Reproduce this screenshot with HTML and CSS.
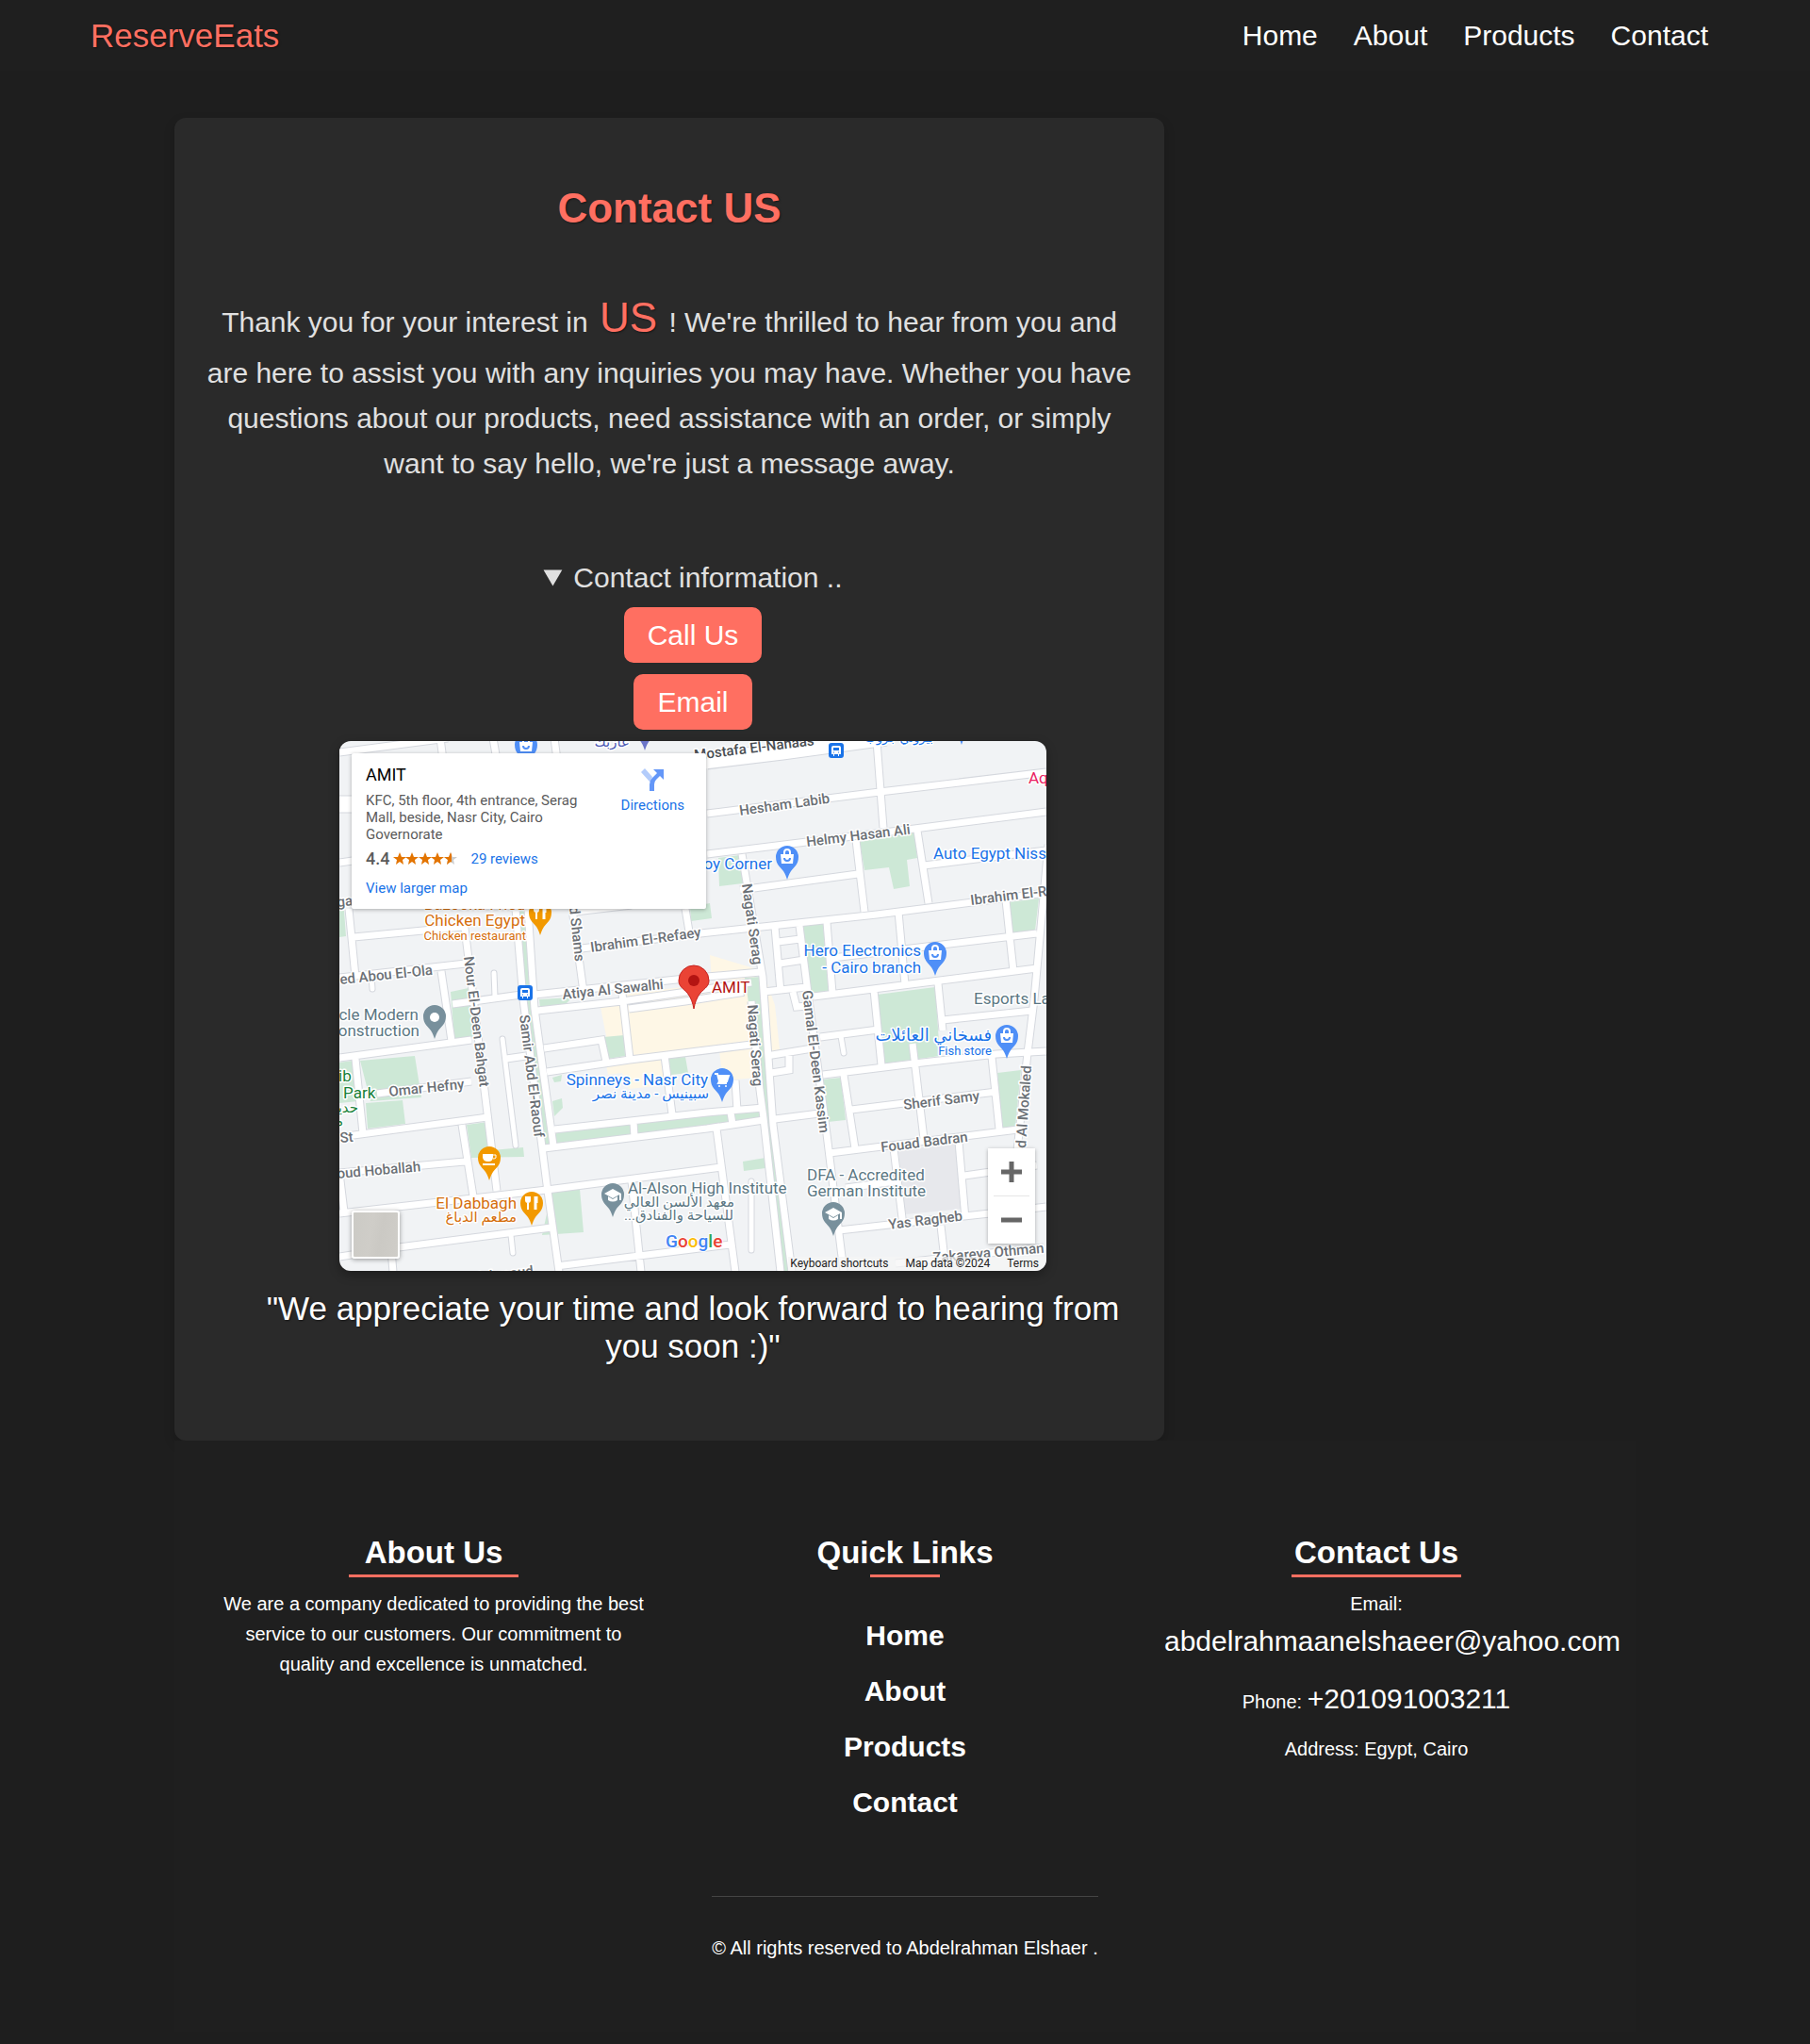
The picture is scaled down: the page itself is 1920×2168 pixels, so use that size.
FILE: index.html
```html
<!DOCTYPE html>
<html lang="en">
<head>
<meta charset="utf-8">
<meta name="viewport" content="width=device-width, initial-scale=1">
<title>ReserveEats - Contact</title>
<link rel="stylesheet" href="styles.css">
</head>
<body>
<header class="site-header">
  <a class="logo" href="#">ReserveEats</a>
  <nav class="main-nav">
    <a href="#">Home</a>
    <a href="#">About</a>
    <a href="#">Products</a>
    <a href="#">Contact</a>
  </nav>
</header>

<main class="page">
  <section class="card">
    <h1 class="card-title">Contact US</h1>
    <p class="intro">Thank you for your interest in <span class="brand">US</span> ! We're thrilled to hear from you and are here to assist you with any inquiries you may have. Whether you have questions about our products, need assistance with an order, or simply want to say hello, we're just a message away.</p>

    <div class="contact-block">
      <details open>
        <summary>Contact information ..</summary>
        <div class="contact-list">
          <button class="btn" type="button">Call Us</button>
          <button class="btn" type="button">Email</button>
          <div class="map">
            <svg class="map-canvas" viewBox="0 0 750 562" role="img" aria-label="Map of Nasr City">
              <defs>
                <path id="pin" d="M0 0C-1-3-2-6-4-9C-7-13-12-16-12-24A12 12 0 1 1 12-24C12-16 7-13 4-9C2-6 1-3 0 0Z"/>
                <g id="bag"><path d="M-7-27H7L6-17H-6Z" fill="#fff"/><path d="M-3-27V-29A3 3 0 0 1 3-29V-27" fill="none" stroke="#fff" stroke-width="2"/><path d="M-3-23A3 3 0 0 0 3-23" fill="none" stroke="#4f8ff7" stroke-width="2"/></g>
                <g id="cap" fill="#fff"><path d="M-9-25L0-30L9-25L0-20Z"/><path d="M-5-22V-18Q0-15 5-18V-22L0-19Z"/><path d="M7-25H9V-18H7Z"/></g>
                <g id="fork" fill="none" stroke="#fff"><path d="M-6-31V-27Q-6-25-4-25Q-2-25-2-27V-31M-4-31V-17" stroke-width="2"/><path d="M4-31V-17M5-31V-24" stroke-width="3"/></g>
                <g id="bus"><rect x="-8" y="-8" width="16" height="16" rx="3" fill="#1a73e8"/><path d="M-5-3Q-5-5-3-5H3Q5-5 5-3V4H3V6H2V4H-2V6H-3V4H-5Z" fill="#fff"/><path d="M-3-3H3V0H-3Z" fill="#1a73e8"/><path d="M-3 2H-2M2 2H3" stroke="#1a73e8"/></g>
                <g id="roads">
                  <path d="M0 12L115-3M107-3L110 20M163-3L167 20M228-3L231 20M0 129L14 127M10 178L17 250M15 208L131 197M132 190L167 477M0 251L134 236M108 244L119 318M120 279L193 269M187 178L195 274L220 470L233 563M200 178L207 284L227 429M207 269L367 252L447 245M257 220L383 204L570 184L750 161M247 178L259 266M250 181L310 174M367 178L371 202"/>
                  <path d="M390 77L573 54L750 33M570 0L577 92M390 120L610 93L750 75M548 105L557 181M613 95L625 172M620 132L750 116M425 158L550 141M427 120L449 250L460 407L480 563M437 276L446 370L450 400L468 563M462 197L468 266M488 196L497 267L517 417L535 563M465 213L489 210M467 236L493 232M450 266L495 261M517 192L523 267M503 271L740 241M593 181L600 258M523 230L740 204M707 169L715 244M752 110L737 274L730 331L712 500M567 264L575 344M635 257L640 307"/>
                  <path d="M640 296L735 286M510 314L572 306M608 321L620 422M513 354L610 342L697 332L750 329M220 351L308 338L437 322M453 334L502 326M458 352L477 349V334M535 354L547 432M543 391L697 372M462 401L509 395M520 437L720 412M692 335L700 412M588 432L598 514M657 425L664 507M663 461L740 450M530 519L690 501L750 494M638 514L642 550M590 554L747 537M537 474L590 467"/>
                  <path d="M228 412L390 394L450 389M217 432L390 411L450 402M415 394L417 406M312 404L313 420M420 360L422 392M400 411L420 563M0 501L220 476L390 454L405 452M230 557L390 537L415 534M310 467L320 563M0 547L63 537L225 516M55 540L57 563M0 336L140 317M17 337L25 416M0 420L157 399M40 374L140 361M130 407L142 483M0 458L133 446M0 458L5 499M177 337L198 334M217 326L278 317L283 340M210 286L300 276L437 256M300 268L308 337M307 284L367 276L425 267L424 257M345 334L353 396M481 266L485 282L497 281"/>
                </g>
                <path id="lanes" d="M34 248L35 263M164 246L165 271M173 316L187 429M532 313L535 331M437 467V540M182 524L184 543"/>
              </defs>
              <rect width="750" height="562" fill="#f1f3f5"/>
              <g fill="#fef7e6">
                <path d="M277 282L307 272L312 334L284 318ZM305 268L440 252L446 325L312 336ZM393 227L443 242L440 252L395 254ZM452 252L462 280L467 327L455 330ZM283 344L341 337L345 365L307 369L300 352L285 354ZM403 329L440 325L443 357L420 359L405 345Z"/>
              </g>
              <path d="M593 434L655 427L663 496L600 502Z" fill="#e7e8ec"/>
              <g fill="#cde8d6">
                <path d="M552 107L610 97L613 124L602 126L605 154L588 157L583 134L557 137ZM402 124L425 121L428 151L403 154ZM372 176L393 172L395 188L373 191ZM492 196L513 193L519 267L500 270ZM710 171L742 167L738 201L713 204ZM570 269L632 261L637 334L578 342ZM513 359L532 357L537 402L518 404ZM698 352L723 349L717 409L703 410ZM428 446L452 442V453L429 456Z"/>
                <path d="M430 251L449 250L460 407L480 563H468L450 395L442 330ZM22 339L80 334L87 378L33 382ZM28 384L67 381L70 406L30 411ZM0 341L14 339L20 382L0 384ZM0 180H5L7 207L0 208ZM118 266L137 262L143 314L122 316ZM135 407L157 404L162 434L195 431L196 441L140 442ZM163 0H167V14H163ZM190 178H200L207 274L227 427L217 430L196 274ZM280 314L302 312L303 334L285 337ZM348 337L367 335L370 352L352 354ZM230 414L450 390V401L230 428ZM212 274L247 272L238 281L213 284ZM225 479L255 475L259 521L215 524ZM226 357L236 354L235 361L228 362ZM226 382L236 379L237 389L228 398Z"/>
              </g>
              <use href="#roads" fill="none" stroke="#d5d8de" stroke-width="9"/>
              <use href="#lanes" fill="none" stroke="#d5d8de" stroke-width="7" stroke-linecap="round"/>
              <path d="M390 21L470 11L580-4M0 67H14" fill="none" stroke="#d5d8de" stroke-width="19"/>
              <use href="#roads" fill="none" stroke="#fff" stroke-width="7"/>
              <use href="#lanes" fill="none" stroke="#fff" stroke-width="5" stroke-linecap="round"/>
              <path d="M370 23L470 11L580-4M0 67H14" fill="none" stroke="#fff" stroke-width="17"/>

              <g class="street">
                <text transform="translate(425 79) rotate(-8)">Hesham Labib</text>
                <text transform="translate(496 112) rotate(-7)">Helmy Hasan Ali</text>
                <text class="major" transform="translate(377 20) rotate(-7)">Mostafa El-Nahaas</text>
                <text transform="translate(267 224) rotate(-8)">Ibrahim El-Refaey</text>
                <text transform="translate(670 174) rotate(-7)">Ibrahim El-Refaey</text>
                <text transform="translate(237 274) rotate(-6)">Atiya Al Sawalhi</text>
                <text transform="translate(1 258) rotate(-6)">ed Abou El-Ola</text>
                <text transform="translate(-2 176) rotate(-6)">ga</text>
                <text transform="translate(132 229) rotate(83)">Nour El-Deen Bahgat</text>
                <text transform="translate(244 176) rotate(84)">d Shams</text>
                <text transform="translate(191 291) rotate(83)">Samir Abd El-Raouf</text>
                <text transform="translate(427 152) rotate(82)">Nagati Serag</text>
                <text transform="translate(433 280) rotate(86)">Nagati Serag</text>
                <text transform="translate(491 265) rotate(83)">Gamal El-Deen Kassim</text>
                <text transform="translate(53 377) rotate(-6)">Omar Hefny</text>
                <text transform="translate(-2 464) rotate(-5)">oud Hoballah</text>
                <text transform="translate(1 426) rotate(-5)">St</text>
                <text transform="translate(139 575) rotate(-7)">Mahmoud</text>
                <text transform="translate(599 391) rotate(-7)">Sherif Samy</text>
                <text transform="translate(575 436) rotate(-7)">Fouad Badran</text>
                <text transform="translate(583 518) rotate(-7)">Yas Ragheb</text>
                <text transform="translate(630 553) rotate(-5)">Zakareya Othman</text>
                <text transform="translate(728 432) rotate(-86)">d Al Mokaled</text>
              </g>

              <g class="poi shop">
                <text x="459" y="136" text-anchor="end">oy Corner</text>
                <text x="630" y="125">Auto Egypt Nissan</text>
                <text x="617" y="228" text-anchor="end">Hero Electronics</text>
                <text x="617" y="246" text-anchor="end">- Cairo branch</text>
                <text x="391" y="365" text-anchor="end">Spinneys - Nasr City</text>
                <text class="arabic" x="392" y="379" text-anchor="end">سبينيس - مدينة نصر</text>
                <text class="arabic-large" x="692" y="318" text-anchor="end">فسخاني العائلات</text>
                <text class="sub" x="692" y="333" text-anchor="end">Fish store</text>
                <text class="sub" x="630" y="1" text-anchor="end">بيروني جروب</text>
              </g>
              <text class="poi indigo" x="308" y="6" text-anchor="end">عازبك</text>
              <text class="poi hotel" x="731" y="45">Aqua</text>
              <text class="poi target" x="395" y="267">AMIT</text>
              <g class="poi food">
                <text x="197" y="179" text-anchor="end">Bazooka Fried</text>
                <text x="197" y="196" text-anchor="end">Chicken Egypt</text>
                <text class="sub" x="198" y="211" text-anchor="end">Chicken restaurant</text>
                <text x="188" y="496" text-anchor="end">El Dabbagh</text>
                <text class="arabic" x="188" y="510" text-anchor="end">مطعم الدباغ</text>
              </g>
              <g class="poi place">
                <text x="673" y="279">Esports Lab</text>
                <text x="84" y="296" text-anchor="end">cle Modern</text>
                <text x="85" y="313" text-anchor="end">onstruction</text>
                <text x="306" y="480">Al-Alson High Institute</text>
                <text class="arabic" x="419" y="494" text-anchor="end">معهد الألسن العالي</text>
                <text class="arabic" x="418" y="508" direction="rtl">للسياحة والفنادق...</text>
                <text x="496" y="466">DFA - Accredited</text>
                <text x="496" y="483">German Institute</text>
              </g>
              <g class="poi park">
                <text x="-1" y="361">ib</text>
                <text x="4" y="379">Park</text>
                <text class="arabic" x="20" y="394" text-anchor="end">حديقة</text>
                <text class="arabic" x="4" y="408" text-anchor="end">م</text>
              </g>

              <g fill="#4f8ff7">
                <g transform="translate(475 147)"><use href="#pin"/><use href="#bag"/></g>
                <g transform="translate(632 249)"><use href="#pin"/><use href="#bag"/></g>
                <g transform="translate(708 337)"><use href="#pin"/><use href="#bag"/></g>
                <g transform="translate(198 28)"><use href="#pin"/><use href="#bag"/></g>
                <g transform="translate(406 383)"><use href="#pin"/><path d="M-8-30H-5L-3-22H5L7-28H-4M-3-22L-4-20H5" fill="none" stroke="#fff" stroke-width="2"/><path d="M-4-28H7L5-23H-3Z" fill="#fff"/><circle cx="-3" cy="-17" r="1" fill="#fff"/><circle cx="4" cy="-17" r="1" fill="#fff"/></g>
                <use href="#pin" transform="translate(660 4)"/>
              </g>
              <use href="#pin" transform="translate(324 10)" fill="#6b75c9"/>
              <g fill="#f29900">
                <g transform="translate(213 206)"><use href="#pin"/><use href="#fork"/></g>
                <g transform="translate(204 514)"><use href="#pin"/><use href="#fork"/></g>
                <g transform="translate(159 466)"><use href="#pin"/><path d="M-7-28H4V-25Q4-20-1-20Q-7-20-7-25ZM-7-18H6V-16H-7Z" fill="#fff"/><path d="M4-27H7V-24Q6-23 4-23" fill="none" stroke="#fff"/></g>
              </g>
              <g fill="#78909c">
                <g transform="translate(101 316)"><use href="#pin"/><circle cy="-23" r="5" fill="#fff"/></g>
                <g transform="translate(290 505)"><use href="#pin"/><use href="#cap"/></g>
                <g transform="translate(524 525)"><use href="#pin"/><use href="#cap"/></g>
              </g>
              <use href="#bus" transform="translate(197 267)"/>
              <use href="#bus" transform="translate(527 10)"/>
              <path d="M376 284C375 278 373 272 369 267C364 262 360 260 360 254A16 16 0 0 1 392 254C392 260 388 262 383 267C379 272 377 278 376 284Z" fill="#ea4335" stroke="#c5221f"/>
              <circle cx="376" cy="254" r="6" fill="#b31412"/>
              <text class="google" x="346" y="537"><tspan fill="#4285f4">G</tspan><tspan fill="#ea4335">o</tspan><tspan fill="#fbbc04">o</tspan><tspan fill="#4285f4">g</tspan><tspan fill="#34a853">l</tspan><tspan fill="#ea4335">e</tspan></text>
            </svg>

            <div class="place-card">
              <div class="place-main">
                <div class="place-name">AMIT</div>
                <div class="place-address">KFC, 5th floor, 4th entrance, Serag Mall, beside, Nasr City, Cairo Governorate</div>
                <div class="rating">
                  <span class="score">4.4</span>
                  <svg class="stars" viewBox="0 0 68 14" role="img" aria-label="4.4 stars">
                    <defs>
                      <path id="star" d="M7 0L9 5H14L10 8L11 13L7 10L3 13L4 8L0 5H5Z"/>
                      <clipPath id="half"><path d="M0 0H8V14H0Z"/></clipPath>
                    </defs>
                    <g fill="#e37400"><use href="#star"/><use href="#star" x="13"/><use href="#star" x="27"/><use href="#star" x="40"/></g>
                    <use href="#star" x="54" fill="#ccc"/>
                    <g transform="translate(54 0)"><use href="#star" fill="#e37400" clip-path="url(#half)"/></g>
                  </svg>
                  <a href="#">29 reviews</a>
                </div>
                <a class="larger" href="#">View larger map</a>
              </div>
              <a class="directions" href="#">
                <svg viewBox="0 0 24 24" width="24" height="24" aria-hidden="true"><path d="M0 4L4 0L12 9L10 15Z" fill="#b3ccfb"/><path d="M9 24V17Q9 13 12 10L17 5L13 1H24V12L20 8L16 12Q14 14 14 17V24Z" fill="#6497f8"/></svg>
                <span>Directions</span>
              </a>
            </div>

            <button class="satellite" type="button" aria-label="Show satellite imagery"></button>
            <div class="zoom">
              <button type="button" aria-label="Zoom in"><svg viewBox="0 0 22 22" width="22" height="22"><path d="M0 11H22M11 0V22" stroke="#666" stroke-width="5"/></svg></button>
              <button type="button" aria-label="Zoom out"><svg viewBox="0 0 22 22" width="22" height="22"><path d="M0 11H22" stroke="#666" stroke-width="5"/></svg></button>
            </div>
            <div class="attribution"><a href="#">Keyboard shortcuts</a><span>Map data ©2024</span><a href="#">Terms</a></div>
          </div>
        </div>
      </details>
      <p class="quote">"We appreciate your time and look forward to hearing from you soon :)"</p>
    </div>
  </section>

  <footer class="site-footer">
    <div class="footer-columns">
      <section class="footer-col">
        <h2>About Us</h2>
        <p>We are a company dedicated to providing the best service to our customers. Our commitment to quality and excellence is unmatched.</p>
      </section>
      <section class="footer-col links">
        <h2>Quick Links</h2>
        <ul>
          <li><a href="#">Home</a></li>
          <li><a href="#">About</a></li>
          <li><a href="#">Products</a></li>
          <li><a href="#">Contact</a></li>
        </ul>
      </section>
      <section class="footer-col">
        <h2>Contact Us</h2>
        <p>Email: <a href="#">abdelrahmaanelshaeer@yahoo.com</a></p>
        <p>Phone: <a href="#">+201091003211</a></p>
        <p>Address: Egypt, Cairo</p>
      </section>
    </div>
    <p class="copyright">© All rights reserved to Abdelrahman Elshaer .</p>
  </footer>
</main>
</body>
</html>
```

FILE: styles.css
```css
* {
  box-sizing: border-box;
  margin: 0;
  padding: 0;
}

body {
  background: #1e1e1e;
  color: #fff;
  font-family: "Liberation Sans", Arial, sans-serif;
  font-size: 20px;
}

a {
  color: inherit;
  text-decoration: none;
}

.site-header {
  display: flex;
  align-items: center;
  justify-content: space-between;
  min-height: 75px;
  padding: 0 108px 0 5%;
  background: #1f1f1f;
}

.logo {
  color: #ff6f61;
  font-size: 35px;
  text-shadow: 1px 1px 2px rgba(0, 0, 0, 0.5);
}

.main-nav {
  display: flex;
  gap: 38px;
  font-size: 30px;
}

.page {
  max-width: 1550px;
  margin: 50px auto 0;
}

.card {
  max-width: 1050px;
  padding: 71px 30px 80px;
  border-radius: 12px;
  background: #2a2a2a;
  box-shadow: 0 5px 12px rgba(0, 0, 0, 0.2);
  color: #e0e0e0;
  font-size: 30px;
  text-align: center;
}

.card-title {
  margin-bottom: 56px;
  color: #ff6f61;
  font-size: 44px;
  line-height: 50px;
  text-shadow: 1px 1px 2px rgba(0, 0, 0, 0.5);
}

.intro {
  margin-bottom: 79px;
  line-height: 1.6;
}

.brand {
  margin: 0 4px;
  color: #ff6f61;
  font-size: 44px;
  text-shadow: 1px 1px 2px rgba(0, 0, 0, 0.5);
}

.contact-block {
  padding-left: 50px;
}

summary {
  line-height: 35px;
  cursor: pointer;
}

.contact-list {
  display: flex;
  flex-direction: column;
  align-items: center;
  gap: 12px;
  padding-top: 14px;
}

.btn {
  padding: 12px 25px;
  border: 0;
  border-radius: 10px;
  background: #ff6f61;
  color: #fff;
  font: 30px/35px "Liberation Sans", Arial, sans-serif;
}

.quote {
  margin-top: 20px;
  color: #fff;
  font-size: 35px;
  line-height: 40px;
  text-shadow: 1px 1px 2px rgba(0, 0, 0, 0.5);
}

/* Map */
.map {
  position: relative;
  width: 100%;
  max-width: 750px;
  border-radius: 12px;
  overflow: hidden;
  box-shadow: 0 4px 12px rgba(0, 0, 0, 0.3);
  font-family: Roboto, "Noto Sans", sans-serif;
  font-size: 15px;
  text-align: left;
}

.map-canvas {
  display: block;
  width: 100%;
}

.street text,
.poi {
  stroke: #fff;
  stroke-width: 3px;
  stroke-linejoin: round;
  paint-order: stroke;
}

.street text {
  fill: #6b7076;
  font-size: 15px;
  font-weight: 500;
}

.street .major {
  fill: #4a4e53;
}

.poi {
  font-family: Roboto, "DejaVu Sans", sans-serif;
  font-size: 17px;
}

.poi .sub {
  font-size: 13px;
}

.poi .arabic {
  font-size: 15px;
}

.poi .arabic-large {
  font-size: 18px;
}

.shop { fill: #1a73e8; }
.indigo { fill: #4f5bb5; font-size: 15px; }
.hotel { fill: #e91e63; }
.target { fill: #b31412; }
.food { fill: #d56e0c; }
.place { fill: #5b7783; }
.park { fill: #188038; }

.google {
  font-size: 19px;
  font-weight: 500;
  stroke: #fff;
  stroke-width: 2px;
  paint-order: stroke;
}

.place-card {
  position: absolute;
  top: 13px;
  left: 13px;
  display: flex;
  justify-content: space-between;
  align-items: flex-start;
  width: 376px;
  padding: 11px 23px 13px 15px;
  border-radius: 2px;
  background: #fff;
  box-shadow: 0 1px 4px rgba(0, 0, 0, 0.3);
  color: #5b5b5b;
  line-height: 18px;
}

.place-card a {
  color: #1a73e8;
}

.place-main {
  width: 240px;
}

.place-name {
  margin-bottom: 6px;
  color: #000;
  font-size: 18px;
  line-height: 24px;
}

.rating {
  display: flex;
  align-items: center;
  margin: 5px 0 10px;
  line-height: 24px;
}

.score {
  font-size: 18px;
  font-weight: 500;
}

.stars {
  width: 68px;
  height: 14px;
  margin: 0 14px 0 4px;
}

.directions {
  display: flex;
  flex-direction: column;
  align-items: center;
  gap: 6px;
  padding-top: 5px;
}

.satellite {
  position: absolute;
  bottom: 13px;
  left: 13px;
  width: 51px;
  height: 51px;
  border: 2px solid #fff;
  border-radius: 3px;
  background: linear-gradient(100deg, #cbcac5, #cfcdc8 40%, #cbc9c4 60%, #cfcdc8);
  box-shadow: 0 1px 5px rgba(0, 0, 0, 0.4);
}

.zoom {
  position: absolute;
  right: 12px;
  bottom: 29px;
  display: flex;
  flex-direction: column;
  width: 50px;
  background: #fff;
  box-shadow: 0 1px 4px rgba(0, 0, 0, 0.3);
}

.zoom button {
  display: grid;
  place-items: center;
  height: 50px;
  border: 0;
  background: none;
}

.zoom button + button {
  height: 51px;
  margin: 0 6px;
  border-top: 1px solid #e6e6e6;
}

.attribution {
  position: absolute;
  right: 0;
  bottom: 0;
  display: flex;
  gap: 18px;
  padding: 0 8px 0 2px;
  background: rgba(245, 245, 245, 0.7);
  color: #222;
  font-size: 12px;
  line-height: 15px;
}

/* Footer */
.site-footer {
  padding: 100px 50px 77px;
  background: #1f1f1f;
  text-align: center;
}

.footer-columns {
  display: grid;
  grid-template-columns: 450px auto 450px;
  justify-content: space-between;
  align-items: start;
}

.footer-col h2 {
  display: flex;
  flex-direction: column;
  align-items: center;
  gap: 4px;
  margin-bottom: 12px;
  font-size: 33px;
  line-height: 38px;
}

.footer-col h2::after {
  content: "";
  width: 40%;
  height: 3px;
  background: #ff6f61;
}

.footer-col p {
  margin-bottom: 13px;
  line-height: 1.6;
}

.footer-col p a {
  font-size: 30px;
}

.links ul {
  display: flex;
  flex-direction: column;
  gap: 24px;
  padding-top: 32px;
  list-style: none;
  font-size: 30px;
  font-weight: bold;
  line-height: 35px;
}

.copyright {
  width: fit-content;
  margin: 82px auto 0;
  padding-top: 43px;
  border-top: 1px solid #444;
  line-height: 23px;
}
```
